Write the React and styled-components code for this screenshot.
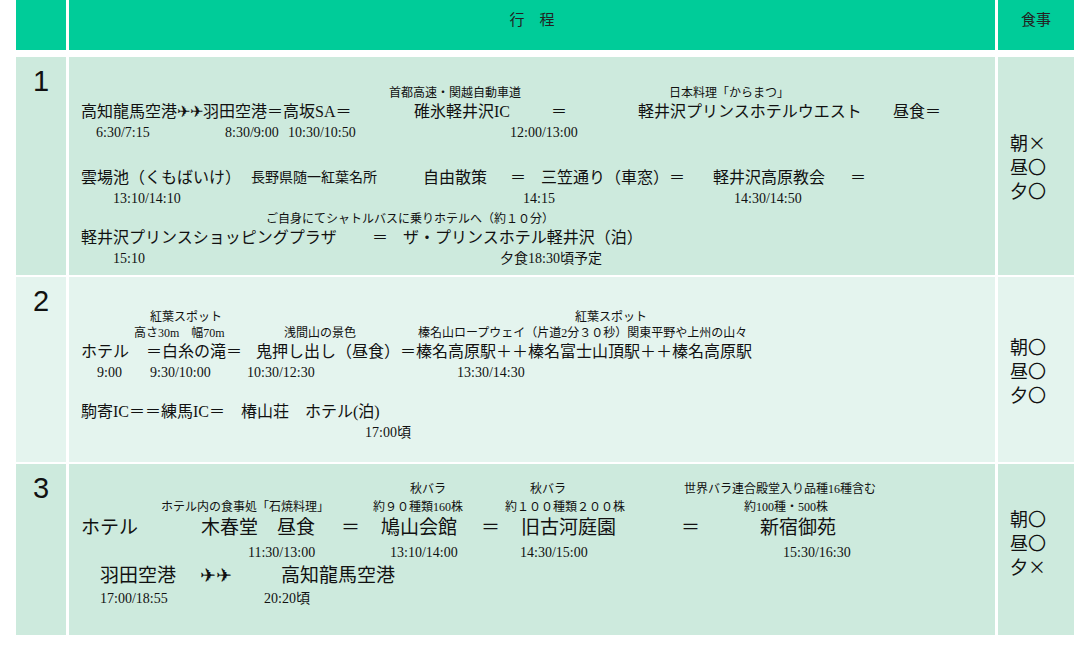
import React from 'react'
import styled, { createGlobalStyle } from 'styled-components'

const Global = createGlobalStyle`
  body { margin: 0; background: #fff; font-family: "Liberation Serif", "Noto Sans CJK JP", serif; color: #111; }
`

const Table = styled.div`
  width: 1057px;
  margin-left: 16px;
  display: grid;
  grid-template-columns: 50px 926px 76px;
  column-gap: 3px;
`
const HeadCell = styled.div`
  background: #00cc99;
  height: 50px;
  margin-bottom: 7px;
  display: flex;
  justify-content: center;
  padding-top: 8px;
  box-sizing: border-box;
  font-family: "Noto Sans CJK JP", sans-serif;
  font-size: 15px;
  color: #222;
`
const Cell = styled.div`
  background: ${p => p.$alt ? '#e4f4ee' : '#cdeadd'};
  height: ${p => p.$h}px;
  margin-bottom: 2px;
  box-sizing: border-box;
  overflow: hidden;
`
const Num = styled(Cell)`
  font-family: "Liberation Sans", sans-serif;
  font-size: 29px;
  text-align: center;
  padding-top: 8px;
`
const Body = styled(Cell)`
  display: flex;
  flex-direction: column;
  padding-top: ${p => p.$pt}px;
`
const Meal = styled(Cell)`
  display: flex;
  flex-direction: column;
  justify-content: center;
  padding-left: 12px;
  padding-bottom: ${p => p.$pb || 0}px;
  font-family: "Noto Sans CJK JP", sans-serif;
  font-size: 18px;
`
const MealItem = styled.div`
  height: 24px;
  line-height: 24px;
`
const Line = styled.div`
  display: flex;
  height: ${p => p.$h}px;
  line-height: ${p => p.$h}px;
  margin-top: ${p => p.$mt || 0}px;
  font-size: ${p => p.$fs}px;
  white-space: pre;
`
const Seg = styled.span`
  flex: 0 0 auto;
  font-size: ${p => p.$fs ? `${p.$fs}px` : 'inherit'};
`

const kinds = {
  ann: { h: 16, fs: 12 },
  main: { h: 22, fs: 16 },
  big: { h: 26, fs: 19 },
  time: { h: 20, fs: 14 },
}

const TextLine = ({ kind, mt, items }) => {
  const k = kinds[kind]
  return (
    <Line $h={k.h} $fs={k.fs} $mt={mt}>
      <Seg style={{ width: items[0][0] - 69 }} />
      {items.map(([x, t, fs], i) => (
        <Seg key={i} $fs={fs} style={i < items.length - 1 ? { width: items[i + 1][0] - x } : undefined}>{t}</Seg>
      ))}
    </Line>
  )
}

const days = [
  {
    n: '1', h: 218, pt: 28, meals: ['朝×', '昼〇', '夕〇'],
    lines: [
      ['ann', 0, [[389, '首都高速・関越自動車道'], [669, '日本料理「からまつ」']]],
      ['main', 0, [[81, '高知龍馬空港✈✈羽田空港＝高坂SA＝'], [414, '碓氷軽井沢IC'], [551, '＝'], [638, '軽井沢プリンスホテルウエスト'], [893, '昼食＝']]],
      ['time', 0, [[96, '6:30/7:15'], [225, '8:30/9:00'], [288, '10:30/10:50'], [510, '12:00/13:00']]],
      ['main', 24, [[81, '雲場池（くもばいけ）'], [251, '長野県随一紅葉名所', 14], [423, '自由散策'], [510, '＝'], [541, '三笠通り（車窓）＝'], [713, '軽井沢高原教会'], [850, '＝']]],
      ['time', 0, [[113, '13:10/14:10'], [523, '14:15'], [734, '14:30/14:50']]],
      ['ann', 2, [[266, 'ご自身にてシャトルバスに乗りホテルへ（約１０分）']]],
      ['main', 0, [[81, '軽井沢プリンスショッピングプラザ'], [372, '＝'], [403, 'ザ・プリンスホテル軽井沢（泊）']]],
      ['time', 0, [[113, '15:10'], [500, '夕食18:30頃予定']]],
    ],
  },
  {
    n: '2', h: 185, pt: 32, alt: true, meals: ['朝〇', '昼〇', '夕〇'],
    lines: [
      ['ann', 0, [[150, '紅葉スポット'], [575, '紅葉スポット']]],
      ['ann', 0, [[134, '高さ30m　幅70m'], [284, '浅間山の景色'], [418, '榛名山ロープウェイ（片道2分３０秒）関東平野や上州の山々']]],
      ['main', 0, [[81, 'ホテル'], [146, '＝白糸の滝＝'], [256, '鬼押し出し（昼食）＝榛名高原駅＋＋榛名富士山頂駅＋＋榛名高原駅']]],
      ['time', 0, [[97, '9:00'], [150, '9:30/10:00'], [247, '10:30/12:30'], [457, '13:30/14:30']]],
      ['main', 18, [[81, '駒寄IC＝＝練馬IC＝　椿山荘　ホテル(泊)']]],
      ['time', 0, [[365, '17:00頃']]],
    ],
  },
  {
    n: '3', h: 171, pt: 17, meals: ['朝〇', '昼〇', '夕×'], pb: 16,
    lines: [
      ['ann', 0, [[410, '秋バラ'], [530, '秋バラ'], [684, '世界バラ連合殿堂入り品種16種含む']]],
      ['ann', 2, [[161, 'ホテル内の食事処「石焼料理」'], [373, '約９０種類160株'], [505, '約１００種類２００株'], [744, '約100種・500株']]],
      ['big', 0, [[81, 'ホテル'], [201, '木春堂　昼食'], [341, '＝'], [381, '鳩山会館'], [481, '＝'], [521, '旧古河庭園'], [681, '＝'], [760, '新宿御苑']]],
      ['time', 2, [[248, '11:30/13:00'], [390, '13:10/14:00'], [520, '14:30/15:00'], [783, '15:30/16:30']]],
      ['big', 0, [[100, '羽田空港'], [200, '✈✈'], [281, '高知龍馬空港']]],
      ['time', 0, [[100, '17:00/18:55'], [264, '20:20頃']]],
    ],
  },
]

export default function App() {
  return (
    <>
      <Global />
      <Table>
        <HeadCell />
        <HeadCell>行　程</HeadCell>
        <HeadCell>食事</HeadCell>
        {days.map(d => (
          <React.Fragment key={d.n}>
            <Num $h={d.h} $alt={d.alt}>{d.n}</Num>
            <Body $h={d.h} $alt={d.alt} $pt={d.pt}>
              {d.lines.map(([kind, mt, items], i) => <TextLine key={i} kind={kind} mt={mt} items={items} />)}
            </Body>
            <Meal $h={d.h} $alt={d.alt} $pb={d.pb}>
              {d.meals.map(m => <MealItem key={m}>{m}</MealItem>)}
            </Meal>
          </React.Fragment>
        ))}
      </Table>
    </>
  )
}
